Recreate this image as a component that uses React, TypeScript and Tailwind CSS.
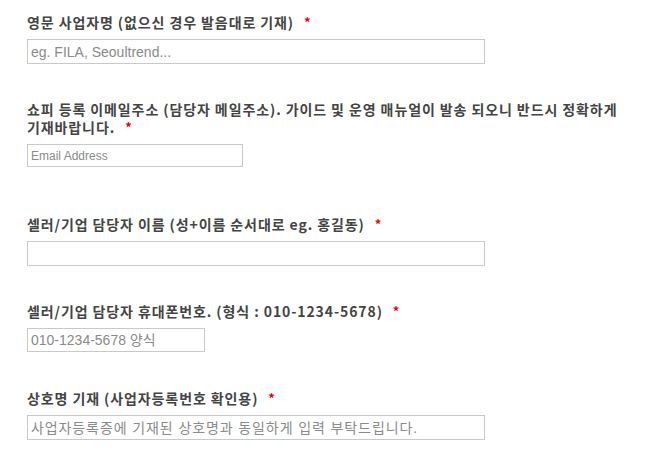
import React from "react";

const labelFont = "font-['Noto_Sans_CJK_KR','Liberation_Sans',sans-serif]";

function Req() {
  return <span className="ml-[10px] text-[13px] leading-none tracking-normal text-[#ee0000] relative -top-[1px]">*</span>;
}

function Field({
  label,
  placeholder,
  inputClass,
  gap,
}: {
  label: React.ReactNode;
  placeholder: string;
  inputClass: string;
  gap: string;
}) {
  return (
    <div className={gap}>
      <label className={`block break-keep text-[14px] leading-[18px] tracking-[0.9px] font-bold text-[#444] ${labelFont}`}>
        {label}
        <Req />
      </label>
      <input
        type="text"
        placeholder={placeholder}
        className={`mt-[8px] block border border-[#c9c9c9] bg-white px-[3px] text-[#555] placeholder:text-[#8a8a8a] outline-none font-['Liberation_Sans','Noto_Sans_CJK_KR',sans-serif] ${inputClass}`}
      />
    </div>
  );
}

export default function App() {
  return (
    <div className="min-h-[463px] bg-white pl-[27px] pr-[27px] pt-[13px]">
      <Field
        gap=""
        label="영문 사업자명 (없으신 경우 발음대로 기재)"
        placeholder="eg. FILA, Seoultrend..."
        inputClass="w-[458px] h-[25px] text-[14px]"
      />
      <Field
        gap="mt-[36px]"
        label="쇼피 등록 이메일주소 (담당자 메일주소). 가이드 및 운영 매뉴얼이 발송 되오니 반드시 정확하게 기재바랍니다."
        placeholder="Email Address"
        inputClass="w-[216px] h-[23px] text-[12px]"
      />
      <Field
        gap="mt-[48px]"
        label="셀러/기업 담당자 이름 (성+이름 순서대로 eg. 홍길동)"
        placeholder=""
        inputClass="w-[458px] h-[25px] text-[14px]"
      />
      <Field
        gap="mt-[36px]"
        label="셀러/기업 담당자 휴대폰번호. (형식 : 010-1234-5678)"
        placeholder="010-1234-5678 양식"
        inputClass="w-[178px] h-[24px] text-[14px]"
      />
      <Field
        gap="mt-[37px]"
        label="상호명 기재 (사업자등록번호 확인용)"
        placeholder="사업자등록증에 기재된 상호명과 동일하게 입력 부탁드립니다."
        inputClass="w-[458px] h-[25px] text-[14px] tracking-[0.9px]"
      />
    </div>
  );
}
